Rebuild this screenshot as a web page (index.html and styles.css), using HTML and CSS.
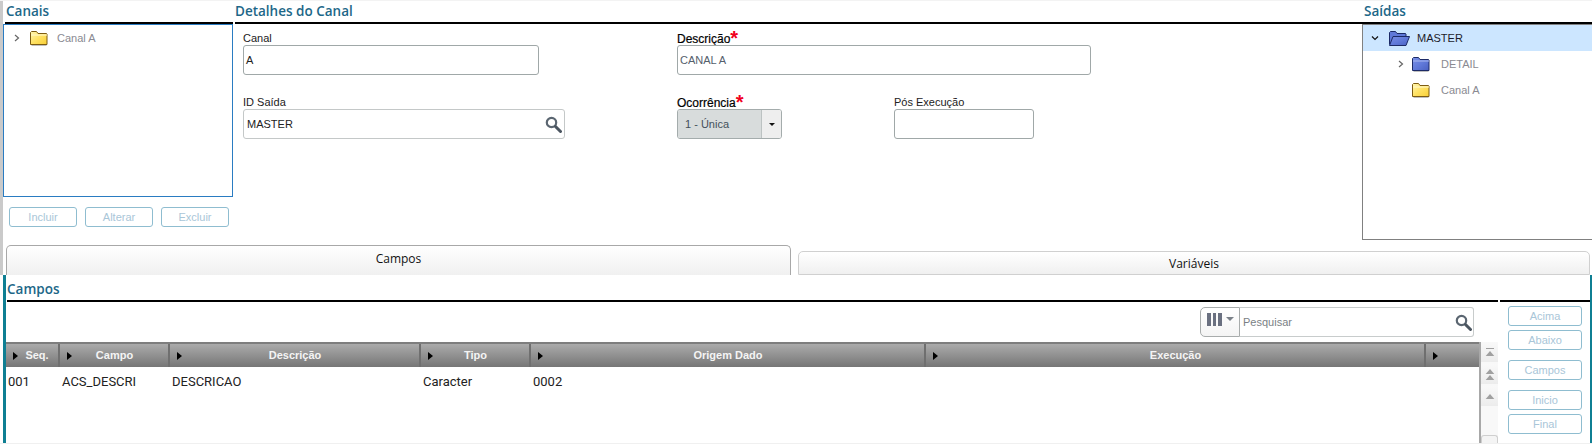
FILE: index.html
```html
<!DOCTYPE html>
<html lang="pt">
<head>
<meta charset="utf-8">
<title>Detalhes do Canal</title>
<link rel="stylesheet" href="styles.css">
</head>
<body>
<svg class="defs" width="0" height="0" aria-hidden="true">
  <defs>
    <linearGradient id="gy" x1="0" y1="0" x2="1" y2="1"><stop offset="0" stop-color="#fff6b0"/><stop offset="0.5" stop-color="#ffe264"/><stop offset="1" stop-color="#f8cf35"/></linearGradient>
    <linearGradient id="gb" x1="0" y1="0" x2="1" y2="1"><stop offset="0" stop-color="#7a90e6"/><stop offset="0.55" stop-color="#5f78d8"/><stop offset="1" stop-color="#4a60c0"/></linearGradient>
    <symbol id="folder-y" viewBox="0 0 20 17">
      <path d="M2.500 3.500h15v12.500h-15z" fill="#000" opacity=".25"/>
      <path d="M1.500 14.500V2.500l1-1h5l1.500 2h8.500l.5 .5v10.500z" fill="url(#gy)" stroke="#7d5c12"/>
      <path d="M2 5h16" stroke="#fff9cf"/>
    </symbol>
    <symbol id="folder-b" viewBox="0 0 20 17">
      <path d="M2.500 3.500h15v12.500h-15z" fill="#000" opacity=".25"/>
      <path d="M1.500 14.500V2.500l1-1h5l1.500 2h8.500l.5 .5v10.500z" fill="url(#gb)" stroke="#1c2a66"/>
      <path d="M2 5h16" stroke="#a9b8f0"/>
    </symbol>
    <symbol id="folder-o" viewBox="0 0 23 17">
      <path d="M1.500 14.500V2.500l1-1h5l1.500 2h8.500l.5 .5V7" fill="#5f78d8" stroke="#1c2a66"/>
      <path d="M1.500 15.500l3.500-9h16.500l-3.500 9z" fill="url(#gb)" stroke="#1c2a66"/>
    </symbol>
    <symbol id="lens" viewBox="0 0 17 17">
      <circle cx="6.500" cy="6.500" r="4.700" fill="#fff" stroke="#5b6671" stroke-width="2.200"/>
      <path d="M10.500 10.500l5 5" stroke="#4b5560" stroke-width="3" stroke-linecap="round"/>
    </symbol>
    <symbol id="chev-r" viewBox="0 0 8 8"><path d="M2 1l3.500 3-3.500 3" fill="none" stroke="#666" stroke-width="1.200"/></symbol>
    <symbol id="chev-d" viewBox="0 0 8 8"><path d="M1 2.500l3 3 3-3" fill="none" stroke="#111" stroke-width="1.200"/></symbol>
    <symbol id="up" viewBox="0 0 14 8"><path d="M7 1l5 6H2z" fill="#a0a0a0"/></symbol>
  </defs>
</svg>

<div class="top">
  <section class="col">
    <h2 class="title">Canais</h2>
    <div class="tree tree-blue">
      <div class="node">
        <svg class="chev"><use href="#chev-r"/></svg>
        <svg class="folder"><use href="#folder-y"/></svg>
        <span class="node-text">Canal A</span>
      </div>
    </div>
    <div class="btn-row">
      <button class="btn btn-wide">Incluir</button>
      <button class="btn btn-wide">Alterar</button>
      <button class="btn btn-wide">Excluir</button>
    </div>
  </section>

  <section class="col">
    <h2 class="title">Detalhes do Canal</h2>
    <div class="form">
      <div class="field f-canal">
        <label class="label">Canal</label>
        <div class="input input-strong">A</div>
      </div>
      <div class="field f-desc">
        <label class="label strong">Descrição<span class="req">*</span></label>
        <div class="input input-strong muted">CANAL A</div>
      </div>
      <div class="field f-id">
        <label class="label">ID Saída</label>
        <div class="input input-soft">MASTER
          <svg class="lens"><use href="#lens"/></svg>
        </div>
      </div>
      <div class="field f-oco">
        <label class="label strong">Ocorrência<span class="req">*</span></label>
        <div class="select">
          <span class="select-value">1 - Única</span>
          <span class="select-btn"><i class="caret"></i></span>
        </div>
      </div>
      <div class="field f-pos">
        <label class="label">Pós Execução</label>
        <div class="input input-strong"></div>
      </div>
    </div>
  </section>

  <section class="col col-right">
    <h2 class="title">Saídas</h2>
    <div class="tree tree-gray">
      <div class="node node-sel">
        <svg class="chev chev-down"><use href="#chev-d"/></svg>
        <svg class="folder folder-open"><use href="#folder-o"/></svg>
        <span class="node-text dark">MASTER</span>
      </div>
      <div class="node node-sub">
        <svg class="chev"><use href="#chev-r"/></svg>
        <svg class="folder"><use href="#folder-b"/></svg>
        <span class="node-text">DETAIL</span>
      </div>
      <div class="node node-sub node-leaf">
        <svg class="folder"><use href="#folder-y"/></svg>
        <span class="node-text">Canal A</span>
      </div>
    </div>
  </section>
</div>

<nav class="tabs">
  <div class="tab tab-active">Campos</div>
  <div class="tab tab-idle">Variáveis</div>
</nav>

<div class="panel">
  <div class="panel-main">
    <h2 class="title title-panel">Campos</h2>
    <div class="toolbar">
      <div class="cols-btn"><i class="bar"></i><i class="bar"></i><i class="bar"></i><i class="caret caret-gray"></i></div>
      <div class="search"><span>Pesquisar</span><svg class="lens"><use href="#lens"/></svg></div>
    </div>
    <div class="grid-wrap">
      <div class="grid">
        <div class="row head">
          <div class="th th-seq"><i class="arrow"></i>Seq.</div>
          <div class="th"><i class="arrow"></i>Campo</div>
          <div class="th"><i class="arrow"></i>Descrição</div>
          <div class="th"><i class="arrow"></i>Tipo</div>
          <div class="th"><i class="arrow"></i>Origem Dado</div>
          <div class="th"><i class="arrow"></i>Execução</div>
          <div class="th"><i class="arrow"></i></div>
        </div>
        <div class="row body-row">
          <div>001</div><div>ACS_DESCRI</div><div>DESCRICAO</div><div>Caracter</div><div>0002</div><div></div><div></div>
        </div>
      </div>
      <div class="scroll">
        <div class="sbtn"><i class="cap"></i><svg class="up"><use href="#up"/></svg></div>
        <div class="sbtn"><svg class="up up-stack"><use href="#up"/></svg><svg class="up up-stack"><use href="#up"/></svg></div>
        <div class="sbtn"><svg class="up"><use href="#up"/></svg></div>
        <div class="strack"></div>
        <div class="sbtn sbtn-end"></div>
      </div>
    </div>
  </div>
  <div class="panel-side">
    <div class="side-rule"></div>
    <div class="side-btns">
      <button class="btn">Acima</button>
      <button class="btn">Abaixo</button>
      <button class="btn btn-gap">Campos</button>
      <button class="btn btn-gap">Inicio</button>
      <button class="btn">Final</button>
    </div>
  </div>
</div>
</body>
</html>
```
FILE: styles.css
```css
* { box-sizing: border-box; }
html, body { margin: 0; padding: 0; }
body {
  width: 1592px;
  height: 444px;
  overflow: hidden;
  background: #fff;
  font-family: "Liberation Sans", Arial, sans-serif;
  font-size: 11px;
  color: #222;
  border-top: 1px solid #f3f3f3;
  border-bottom: 1px solid #f0f0f0;
}
.defs { position: absolute; }

.top {
  display: grid;
  grid-template-columns: 230px 1129px 230px;
  height: 243px;
  border-left: 3px solid #cacaca;
}
.col { min-width: 0; display: flex; flex-direction: column; }
.col:nth-child(2) { margin-left: 2px; margin-right: -2px; }
.title {
  margin: 0;
  height: 23px;
  padding: 2px 0 0 1px;
  font-family: "Open Sans", sans-serif;
  font-size: 13.500px;
  line-height: 17px;
  font-weight: 600;
  color: #1d6788;
  border-bottom: 2px solid #000;
  flex: none;
}
.col:first-child .title { margin-left: 2px; }
.col:nth-child(2) .title { padding-left: 0; }
.col-right .title { margin-left: 2px; padding-left: 0; }

.tree { flex: none; background: #fff; }
.tree-blue { height: 173px; border: 1px solid #2a7cc2; }
.tree-gray { height: 216px; border: 1px solid #808080; border-width: 1px 0 1px 1px; }
.node { display: flex; align-items: center; height: 26px; color: #8a8a92; }
.chev { width: 8px; height: 8px; flex: none; margin-left: 9px; }
.folder { width: 20px; height: 17px; flex: none; margin-left: 8px; }
.node-text { margin-left: 8px; }
.node-text.dark { color: #1c1c2a; }
.node-sel { background: #cce6ff; }
.chev-down { margin-left: 8px; }
.folder-open { width: 23px; margin-left: 9px; }
.node-sel .node-text { margin-left: 6px; }
.node-sub { padding-left: 25px; }
.node-sub .folder { margin-left: 6px; }
.node-sub .node-text { margin-left: 10px; }
.node-leaf { padding-left: 42px; }

.btn-row { display: flex; gap: 8px; padding: 10px 0 0 6px; }
.btn {
  display: block;
  width: 74px;
  height: 20px;
  padding: 0;
  background: #fff;
  border: 1px solid #8fbdd0;
  border-radius: 3px;
  color: #a9c6d8;
  font-family: "Liberation Sans", Arial, sans-serif;
  font-size: 11px;
  text-align: center;
}
.btn-wide { width: 68px; }

.form {
  display: grid;
  grid-template-columns: 434px 217px 1fr;
  grid-template-rows: 46px 46px;
  row-gap: 18px;
  padding: 6px 0 0 8px;
}
.field { display: flex; flex-direction: column; }
.f-desc { grid-column: 2 / span 2; }
.f-canal .input { width: 296px; }
.f-desc .input { width: 414px; }
.f-id .input { width: 322px; }
.f-pos .input { width: 140px; }
.label { height: 15px; line-height: 17px; color: #222; display: block; }
.label.strong { font-size: 12px; line-height: 19px; color: #000; -webkit-text-stroke: 0.2px #000; }
.req { color: #f00020; font-size: 20px; line-height: 12px; font-weight: 700; vertical-align: -2px; -webkit-text-stroke: 0; }
.input {
  position: relative;
  height: 30px;
  line-height: 28px;
  padding-left: 2px;
  background: #fff;
  border: 1px solid #a0a8a8;
  border-radius: 3px;
  color: #222;
}
.input-soft { border-color: #c4c8c8; padding-left: 3px; }
.muted { color: #55606c; }
.lens { position: absolute; right: 2px; top: 6px; width: 17px; height: 17px; }

.select {
  display: flex;
  width: 105px;
  height: 30px;
  border: 1px solid #a4acac;
  border-radius: 3px;
  overflow: hidden;
}
.select-value { flex: 1; padding-left: 7px; line-height: 28px; background: #d8dcdc; color: #44505a; }
.select-btn {
  width: 20px;
  display: flex;
  align-items: center;
  justify-content: center;
  background: #eeeeee;
  border-left: 1px solid #bcc2c2;
}
.caret { width: 0; height: 0; border: 3.500px solid transparent; border-top-color: #111; border-bottom: 0; display: block; }

.tabs {
  display: flex;
  align-items: flex-end;
  height: 31px;
  width: 1590px;
  padding-left: 3px;
  gap: 7px;
  border-left: 3px solid #cacaca;
}
.tab {
  background: linear-gradient(#ffffff, #f0f0f0);
  border: 1px solid #a8a8a8;
  border-bottom: 0;
  border-radius: 5px 5px 0 0;
  text-align: center;
  font-family: "Open Sans", sans-serif;
  font-size: 12px;
  color: #111;
}
.tab-active { width: 785px; height: 30px; padding-top: 4px; }
.tab-idle { width: 792px; height: 24px; padding-top: 3px; border-color: #d0d0d0; border-bottom: 1px solid #d0d0d0; }

.panel {
  display: flex;
  margin-left: 3px;
  width: 1589px;
  height: 168px;
  border-left: 3px solid #0f7f93;
  border-right: 2px solid #0f7f93;
}
.panel-main { width: 1492px; flex: none; display: flex; flex-direction: column; padding-left: 1px; }
.title-panel { height: 27px; padding: 6px 0 0 0; }
.toolbar { display: flex; height: 30px; margin-top: 5px; padding-left: 1193px; }
.cols-btn {
  width: 40px;
  height: 30px;
  display: flex;
  align-items: flex-start;
  gap: 2px;
  padding: 5px 0 0 6px;
  background: linear-gradient(#ffffff, #f4f4f4);
  border: 1px solid #a8acac;
  border-radius: 5px 0 0 5px;
}
.bar { display: block; width: 3.500px; height: 13px; background: #6a7080; }
.caret-gray { border-width: 4.500px; border-bottom: 0; border-top-color: #7a8088; margin: 4px 0 0 2px; }
.search {
  position: relative;
  width: 234px;
  height: 30px;
  line-height: 29px;
  padding-left: 3px;
  border: 1px solid #c8cccc;
  border-left: 0;
  border-radius: 0 3px 3px 0;
  color: #7a7f85;
}
.search .lens { top: 6px; right: 1px; }

.grid-wrap { display: flex; margin-top: 5px; flex: 1; min-height: 0; margin-left: -1px; }
.grid { width: 1473px; flex: none; }
.row { display: grid; grid-template-columns: 54px 110px 251px 110px 395px 500px 53px; }
.head {
  height: 25px;
  background: linear-gradient(#ababab, #767676);
  border-top: 2px solid #7e7e7e;
}
.th {
  position: relative;
  padding-left: 1px;
  text-align: center;
  line-height: 22px;
  font-weight: 700;
  color: #f4f4f4;
  border-right: 2px solid #6f6f6f;
}
.th:last-child { border-right: 0; }
.th-seq { padding-left: 10px; }
.arrow {
  position: absolute;
  left: 7px;
  top: 8px;
  width: 0;
  height: 0;
  border: 4px solid transparent;
  border-left: 5px solid #000;
  border-right: 0;
}
.body-row {
  font-family: Roboto, sans-serif;
  font-size: 13px;
  line-height: 30px;
  color: #222;
}
.body-row > div { padding-left: 2px; }
.scroll {
  width: 20px;
  display: flex;
  flex-direction: column;
  gap: 2px;
  background: #f8f8f8;
  border-left: 2px solid #a8a8a8;
}
.sbtn {
  height: 20px;
  background: linear-gradient(#f9f9f9, #ececec);
  display: flex;
  flex-direction: column;
  align-items: center;
  justify-content: center;
  flex: none;
}
.cap { display: block; width: 8px; height: 1px; background: #a0a0a0; margin-bottom: 1px; }
.up { width: 12px; height: 7px; flex: none; }
.up-stack + .up-stack { margin-top: -1px; }
.strack { flex: 1; }
.sbtn-end { height: 8px; border: 1px solid #cfcfcf; border-bottom: 0; border-radius: 3px 3px 0 0; background: #f4f4f4; }

.panel-side { flex: 1; padding-left: 2px; }
.side-rule { height: 2px; margin-top: 25px; background: #000; }
.side-btns { display: flex; flex-direction: column; gap: 4px; padding: 4px 0 0 8px; }
.btn-gap { margin-top: 6px; }
```
